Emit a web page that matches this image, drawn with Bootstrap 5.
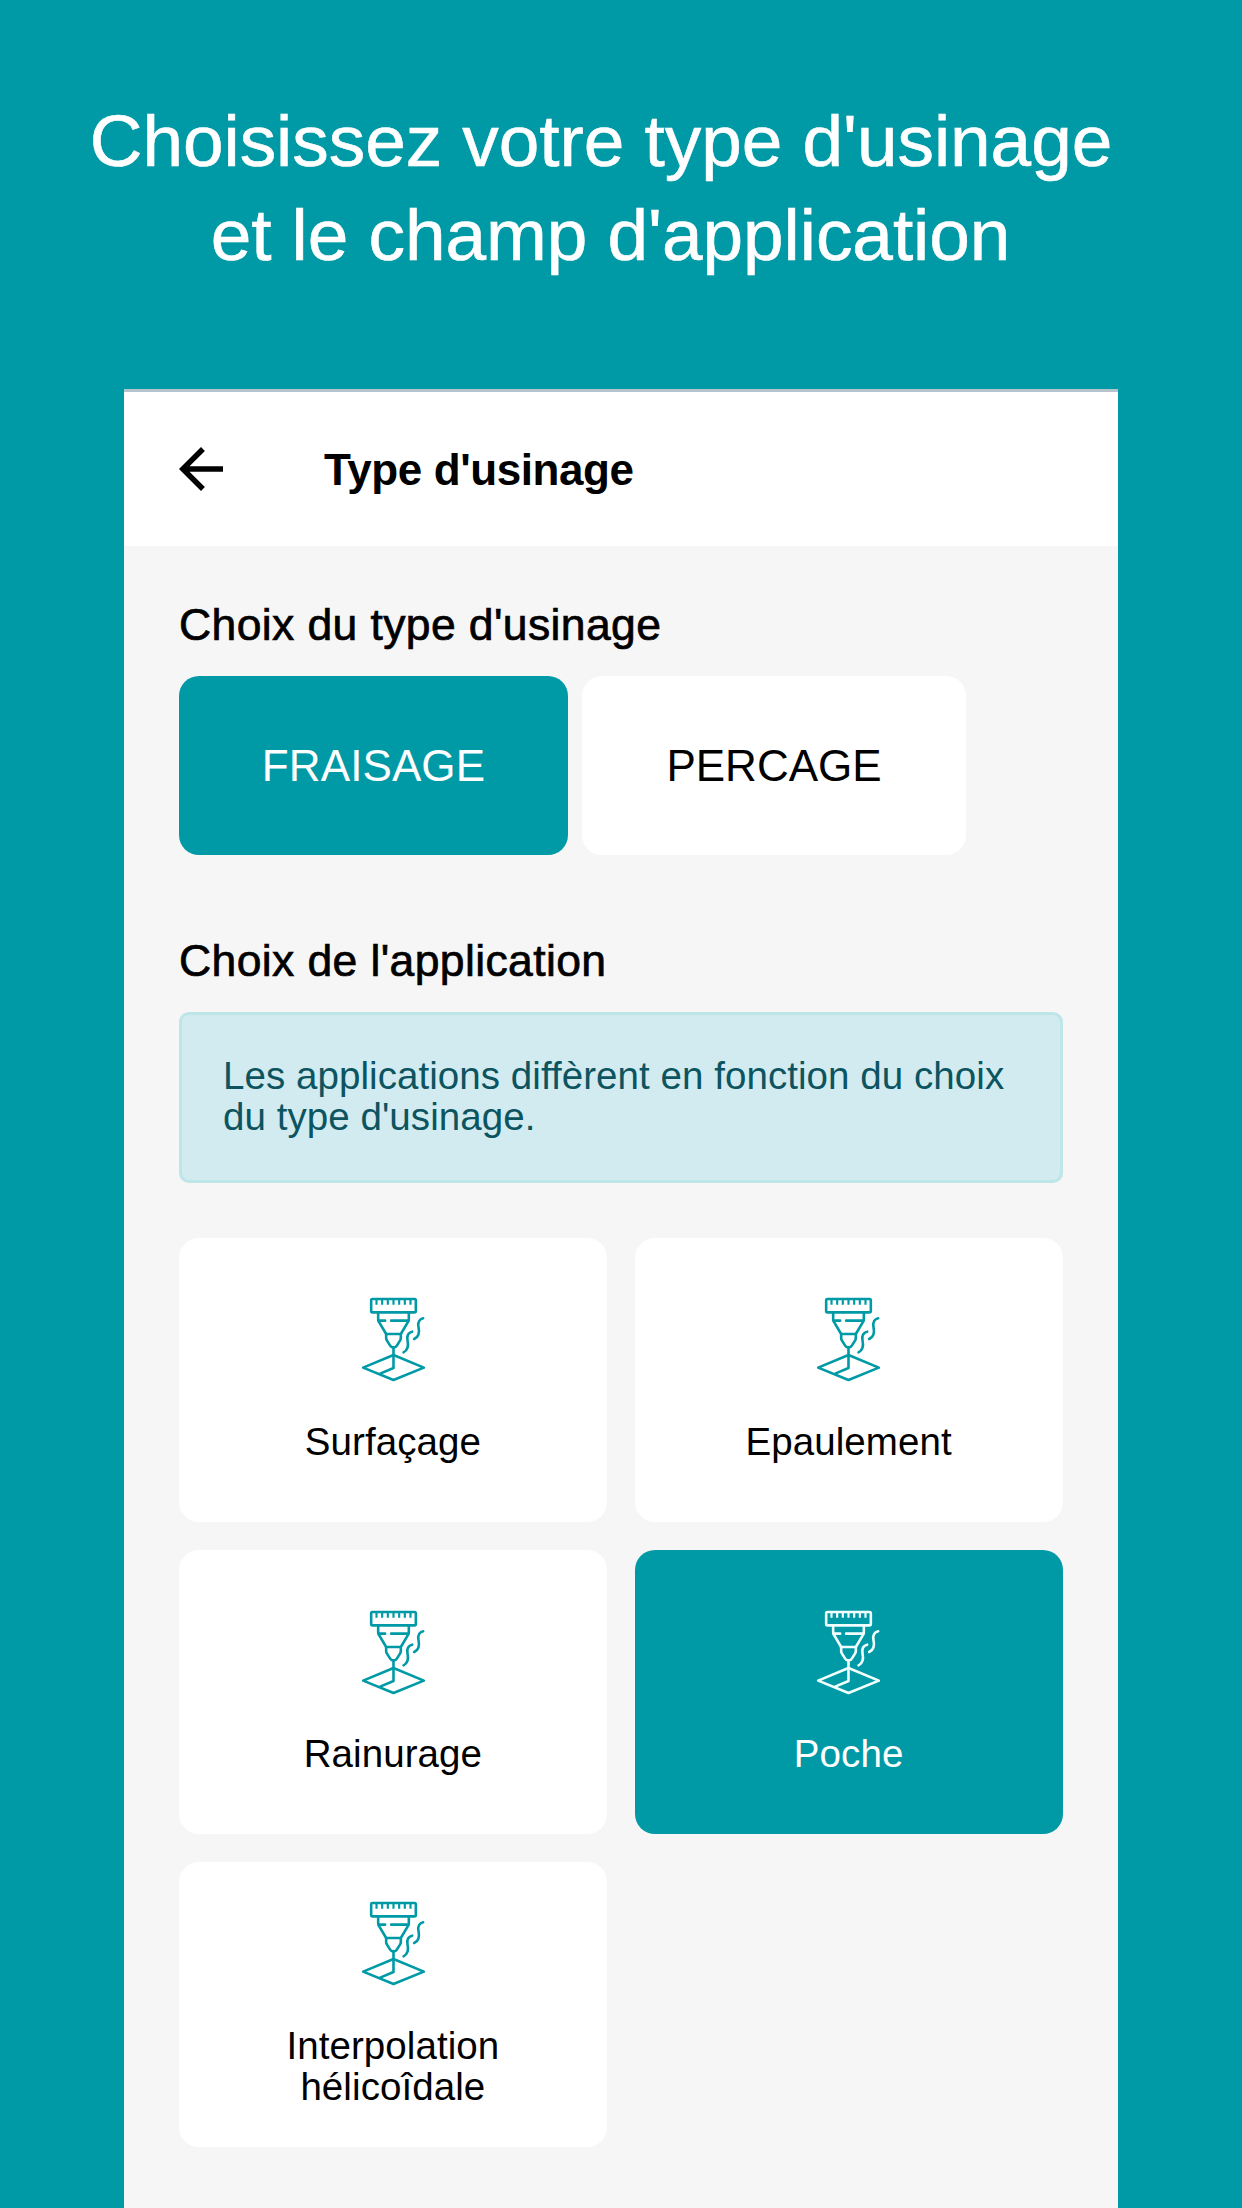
<!DOCTYPE html>
<html lang="fr">
<head>
<meta charset="utf-8">
<meta name="viewport" content="width=device-width, initial-scale=1">
<title>Type d'usinage</title>
<link href="https://cdn.jsdelivr.net/npm/bootstrap@5.3.0/dist/css/bootstrap.min.css" rel="stylesheet">
<style>
  :root { --teal: #009aa6; }
  body { background: var(--teal); font-family: "Liberation Sans", Arial, sans-serif; color: #000; height: 2208px; overflow: hidden; }
  .promo { height: 389px; padding-top: 94px; font-size: 73px; line-height: 94px; letter-spacing: -.06px; -webkit-text-stroke: .6px #fff; }
  .promo-top { padding-right: 40px; }
  .promo-bottom { padding-right: 21px; }
  .phone { width: 994px; height: 1819px; margin-left: 124px; background: #f6f6f6; }
  .topbar { height: 157px; border-top: 3px solid #b4c3cc; padding-left: 44px; }
  .back-icon { width: 66px; height: 66px; }
  .topbar-title { font-size: 44px; line-height: 50px; letter-spacing: -.4px; margin: 2px 0 0 90px; }
  .screen { padding: 54px 55.5px 0 55px; }
  .section-title { font-size: 44.5px; line-height: 50px; font-weight: 400; margin-bottom: 26px; letter-spacing: .38px; -webkit-text-stroke: .7px #000; }
  .kinds { gap: 14px; margin-bottom: 81px; }
  .kind-btn { --bs-btn-border-width: 0; --bs-btn-border-radius: 20px; --bs-btn-padding-y: 0; --bs-btn-padding-x: 0; --bs-btn-font-size: 44px; height: 179px; width: 384px; background: #fff; color: #000; letter-spacing: 0; }
  .kind-btn.active { width: 389px; letter-spacing: .1px; }
  .kind-btn.active, .app-card.active { background: var(--teal); color: #fff; }
  .note { height: 171px; padding: 40px 0 0 41px; margin-bottom: 54.5px; border: 3px solid #bee5e8; border-radius: 10px; background: #d1ebf0; color: #0c5460; font-size: 38.5px; line-height: 41.4px; letter-spacing: .06px; }
  .apps { display: grid; grid-template-columns: 1fr 1fr; column-gap: 28px; row-gap: 27.5px; }
  .app-card { border: 0; border-radius: 20px; height: 284.7px; background: #fff; font-size: 38.5px; line-height: 41.4px; letter-spacing: .08px; color: #000; --ink: var(--teal); }
  .app-card.active { --ink: #f2ffff; }
  .app-icon { width: 66.67px; height: 86.67px; margin-bottom: 37px; stroke: var(--ink); }
</style>
</head>
<body>
<svg class="d-none" aria-hidden="true">
  <symbol id="mill" viewBox="60.5 52 200 260">
    <g fill="none" stroke-width="7.8" stroke-linecap="round" stroke-linejoin="round">
      <rect x="94" y="58" width="134" height="40" rx="4"/>
      <path d="M110 60v15M127 60v15M144 60v15M161 60v15M178 60v15M195 60v15M212 60v15" stroke-width="6.5" stroke-linecap="butt"/>
      <path d="M115 99v20q0 4 2 7l22 37h44l22-37q2-3 2-7V99"/>
      <path d="M117 123h19M154 123h51"/>
      <path d="M139 163v12q0 4 2 7l10 16q3 5 8 5h4q5 0 8-5l10-16q2-3 2-7v-12"/>
      <path d="M161 203v62l-40 17"/>
      <path d="M161 226l91 38-91 37-91-37z"/>
      <path d="M250 116c-11 2-17 12-14 26 4 18 1 30-13 36M217 156c-11 2-17 12-14 26 4 18 1 30-12 36"/>
    </g>
  </symbol>
</svg>

<header class="promo text-white text-center">
  <div class="promo-top text-nowrap">Choisissez votre type d'usinage</div>
  <div class="promo-bottom text-nowrap">et le champ d'application</div>
</header>

<main class="phone">
  <nav class="topbar bg-white d-flex align-items-center">
    <svg class="back-icon" viewBox="0 0 24 24" aria-label="Retour"><path d="M20 11H7.83l5.59-5.59L12 4l-8 8 8 8 1.41-1.41L7.83 13H20v-2z"/></svg>
    <h1 class="topbar-title fw-bold">Type d'usinage</h1>
  </nav>
  <div class="screen">
    <h2 class="section-title">Choix du type d'usinage</h2>
    <div class="kinds d-flex">
      <button type="button" class="btn kind-btn active">FRAISAGE</button>
      <button type="button" class="btn kind-btn">PERCAGE</button>
    </div>
    <h2 class="section-title">Choix de l'application</h2>
    <div class="alert note">Les applications diffèrent en fonction du choix<br>du type d'usinage.</div>
    <div class="apps">
      <div class="card app-card align-items-center justify-content-center text-center"><svg class="app-icon"><use href="#mill"/></svg><span>Surfaçage</span></div>
      <div class="card app-card align-items-center justify-content-center text-center"><svg class="app-icon"><use href="#mill"/></svg><span>Epaulement</span></div>
      <div class="card app-card align-items-center justify-content-center text-center"><svg class="app-icon"><use href="#mill"/></svg><span>Rainurage</span></div>
      <div class="card app-card active align-items-center justify-content-center text-center"><svg class="app-icon"><use href="#mill"/></svg><span>Poche</span></div>
      <div class="card app-card align-items-center justify-content-center text-center"><svg class="app-icon"><use href="#mill"/></svg><span>Interpolation<br>hélicoîdale</span></div>
    </div>
  </div>
</main>
<script src="https://cdn.jsdelivr.net/npm/bootstrap@5.3.0/dist/js/bootstrap.bundle.min.js"></script>
</body>
</html>
